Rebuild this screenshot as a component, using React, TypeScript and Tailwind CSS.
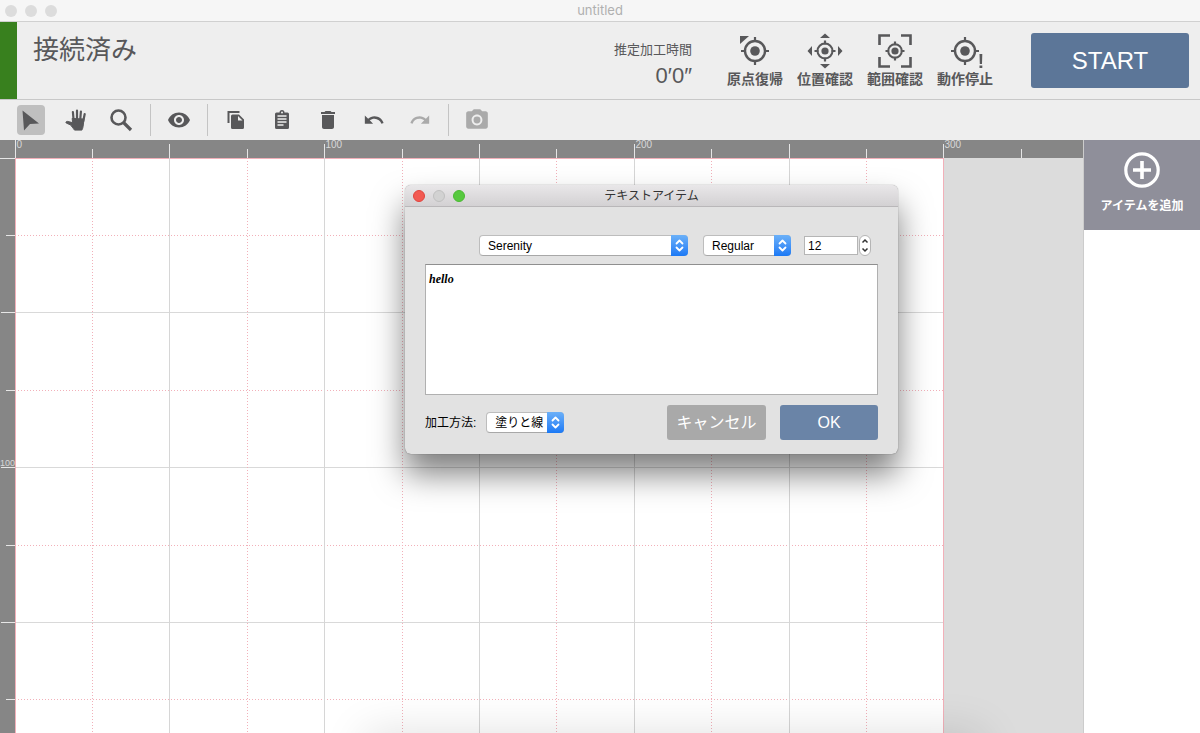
import { useEffect, useState } from 'react';
import type { ReactNode } from 'react';
import { MdDelete, MdPhotoCamera, MdRedo, MdUndo, MdVisibility } from 'react-icons/md';

// pixels for a 25mm step on the work area
const STEP = 77.4;
const SHEET_STEPS = 12;

const range = (n: number) => Array.from({ length: n }, (_, i) => i);
const at = (i: number) => Math.floor(i * STEP) + 0.5;

// how many ruler steps fit beside the side panel and below the bars
const countSteps = () => ({
  x: Math.floor((window.innerWidth - 132) / STEP) + 1,
  y: Math.floor((window.innerHeight - 158) / STEP) + 1
});

const Target = ({ r, dot, reach }: { r: number; dot: number; reach: number }) => (
  <>
    <circle cx="18" cy="18" r={r} fill="none" stroke="currentColor" strokeWidth={r > 8 ? 2.4 : 2} />
    <circle cx="18" cy="18" r={dot} />
    <path
      d={`M18 ${18 - reach}V${19 - r}M18 ${17 + r}V${18 + reach}M${18 - reach} 18H${19 - r}M${17 + r} 18H${18 + reach}`}
      stroke="currentColor"
      strokeWidth="2.2"
    />
  </>
);

const machineActions: { label: string; icon: ReactNode }[] = [
  {
    label: '原点復帰',
    icon: (
      <>
        <Target r={10} dot={4.8} reach={14} />
        <path d="M3 3h9l-9 8z" />
      </>
    )
  },
  {
    label: '位置確認',
    icon: (
      <>
        <Target r={7.5} dot={3.6} reach={10.5} />
        <path d="M18 .5l5 4.500h-10zM18 35.500l5-4.500h-10zM.5 18l4.500-5v10zM35.500 18l-4.500-5v10z" />
      </>
    )
  },
  {
    label: '範囲確認',
    icon: (
      <>
        <Target r={6.8} dot={3.6} reach={9.5} />
        <path
          d="M2.500 12V2.500H13M24 2.500h9.500V12M33.500 24v9.500H24M13 33.500H2.500V24"
          fill="none"
          stroke="currentColor"
          strokeWidth="2.600"
        />
      </>
    )
  },
  {
    label: '動作停止',
    icon: (
      <>
        <Target r={10} dot={4.8} reach={14} />
        <path d="M32.500 21h2.800l-.3 10h-2.200zM32.500 32.500h2.800v2.500h-2.800z" />
      </>
    )
  }
];

const CursorIcon = () => (
  <svg viewBox="0 0 24 24" className="h-6 w-6" fill="currentColor">
    <path d="M3.500 2.500L20 15.500l-9 .5L5 22.500z" />
  </svg>
);

const HandIcon = () => (
  <svg viewBox="0 0 24 24" className="h-6 w-6" fill="currentColor" stroke="currentColor" strokeLinecap="round">
    <path d="M9.500 11L8.900 4M13 11V2.700M16.300 11l.6-7.500M19.300 13l1.400-7" fill="none" strokeWidth="2.200" />
    <path d="M8.500 10.500L20 11l-.9 7.500c-.3 1.800-.8 2.800-1.200 3.600H10.500c-1.500-1.800-2.800-4.200-4.300-5.300L2.200 15c-.8-.8.3-1.800 1.400-1.600l4.800 1.200z" strokeWidth="1" />
  </svg>
);

const SearchIcon = () => (
  <svg viewBox="0 0 24 24" className="h-6 w-6" fill="none" stroke="currentColor">
    <circle cx="9.500" cy="9.500" r="7" strokeWidth="2.600" />
    <path d="M14.500 14.500l7.500 7.500" strokeWidth="3.200" />
  </svg>
);

const CopyIcon = () => (
  <svg viewBox="0 0 24 24" className="h-6 w-6" fill="currentColor">
    <path d="M3.500 3h12v2H5.500v10h-2z" />
    <path
      fillRule="evenodd"
      d="M8.500 6.500h6.500l5 5V19.500a1.500 1.500 0 0 1-1.500 1.500h-10A1.500 1.500 0 0 1 7 19.500V8a1.500 1.500 0 0 1 1.500-1.500zM14 8v4.500h4.500z"
    />
  </svg>
);

const PasteIcon = () => (
  <svg viewBox="0 0 24 24" className="h-6 w-6">
    <path
      fill="currentColor"
      d="M6.500 4.500H9.500a2.500 2.500 0 0 1 5 0h3A1.500 1.500 0 0 1 19 6v13.500a1.500 1.500 0 0 1-1.500 1.500h-11A1.500 1.500 0 0 1 5 19.500V6a1.500 1.500 0 0 1 1.500-1.500z"
    />
    <path d="M7.500 8h9M7.500 11h9M7.500 14h9M7.500 17h6" stroke="#eee" strokeWidth="1.300" />
    <circle cx="12" cy="4.500" r="1" fill="#eee" />
  </svg>
);

const ToolButton = ({
  label,
  active,
  disabled,
  onClick,
  children
}: {
  label: string;
  active?: boolean;
  disabled?: boolean;
  onClick?: () => void;
  children: ReactNode;
}) => (
  <button
    aria-label={label}
    disabled={disabled}
    onClick={onClick}
    className={`flex h-[30px] w-7 items-center justify-center rounded-sm disabled:text-[#aaaaaa] ${
      active ? 'bg-[#bfbfbf]' : ''
    }`}>
    {children}
  </button>
);

const Divider = () => <div className="h-8 w-px bg-[#c4c4c4]" />;

const Select = ({ id, options, className }: { id: string; options: string[]; className: string }) => (
  <div className={`relative flex h-[21px] ${className}`}>
    <select
      id={id}
      aria-label={id}
      className="h-full w-full appearance-none rounded border border-[#bdbdbd] border-b-[#a8a8a8] bg-white pl-2 text-xs leading-4 text-black">
      {options.map(option => (
        <option key={option}>{option}</option>
      ))}
    </select>
    <svg
      viewBox="0 0 17 21"
      className="pointer-events-none absolute top-0 right-0 h-full w-[17px] rounded-r bg-linear-to-b from-[#6bb0f8] to-[#1a79f5]"
      fill="none"
      stroke="white"
      strokeWidth="1.800"
      strokeLinecap="round"
      strokeLinejoin="round">
      <path d="M5.500 8.500l3-3 3 3M5.500 12.500l3 3 3-3" />
    </svg>
  </div>
);

const TopRuler = ({ steps }: { steps: number }) => (
  <svg className="h-[18px] min-w-0 flex-1 bg-[#868686]">
    {range(steps).map(i => (
      <g key={i}>
        <path d={`M${at(i)} ${i === 0 ? 0 : i % 2 ? 9 : 4}V18`} stroke="#e6e6e6" />
        {i % 4 === 0 && (
          <text x={at(i) + 1} y="8" fontSize="10" fill="#d8d8d8">
            {i * 25}
          </text>
        )}
      </g>
    ))}
  </svg>
);

const SideRuler = ({ steps }: { steps: number }) => (
  <svg className="h-full w-[15px] shrink-0 bg-[#868686]">
    {range(steps).map(i => (
      <g key={i}>
        <path d={`M${i === 0 ? 0 : i % 2 ? 6 : 1} ${at(i)}H15`} stroke="#e6e6e6" />
        {i > 0 && i % 4 === 0 && (
          <text x="15" y={at(i) - 2} fontSize="9" fill="#d8d8d8" textAnchor="end">
            {i * 25}
          </text>
        )}
      </g>
    ))}
  </svg>
);

const Sheet = ({ steps }: { steps: number }) => (
  <svg className="h-full w-[929px] shrink-0 bg-white">
    {range(steps).map(i => (
      <path
        key={`h${i}`}
        d={`M0 ${at(i)}H929`}
        stroke={i % 2 || i === 0 ? '#f2b0b9' : '#d9d9d9'}
        strokeDasharray={i % 2 ? '1 2' : undefined}
      />
    ))}
    {range(SHEET_STEPS + 1).map(i => {
      const edge = i === 0 || i === SHEET_STEPS;
      return (
        <path
          key={`v${i}`}
          d={`M${at(i)} 0V2400`}
          stroke={i % 2 || edge ? '#f2b0b9' : '#d6d6d6'}
          strokeDasharray={i % 2 ? '1 2' : undefined}
        />
      );
    })}
  </svg>
);

const TextItemDialog = ({ onClose }: { onClose: () => void }) => {
  const [text, setText] = useState('hello');
  const [size, setSize] = useState(12);

  return (
    <div
      role="dialog"
      aria-labelledby="dialog-title"
      className="absolute top-[45px] left-[405px] w-[493px] rounded-md bg-[#e2e2e2] shadow-[0_0_1px_rgba(0,0,0,0.6),0_20px_32px_rgba(0,0,0,0.5)]">
      <div className="relative flex h-[22px] items-center justify-center rounded-t-md border-b border-[#b9b7b9] bg-linear-to-b from-[#e9e7e9] to-[#d3d1d3]">
        <div className="absolute left-2 flex gap-2">
          <button aria-label="閉じる" onClick={onClose} className="h-3 w-3 rounded-full border border-[#e0443e] bg-[#f25a52]" />
          <button aria-label="しまう" disabled className="h-3 w-3 rounded-full border border-[#c0c0c0] bg-[#d2d2d2]" />
          <button aria-label="拡大" className="h-3 w-3 rounded-full border border-[#4bb934] bg-[#57c93f]" />
        </div>
        <h2 id="dialog-title" className="text-xs text-[#333333]">
          テキストアイテム
        </h2>
      </div>

      <div className="px-5 pt-7 pb-3.5">
        <div className="flex items-center justify-end pr-[7px]">
          <Select id="フォント" options={['Serenity']} className="mr-[15px] w-[209px]" />
          <Select id="スタイル" options={['Regular', 'Bold']} className="mr-[13px] w-[88px]" />
          <input
            aria-label="サイズ"
            value={size}
            onChange={e => setSize(Number(e.target.value))}
            className="mr-px h-[19px] w-[54px] border border-[#b5b5b5] bg-white px-[3px] text-xs text-black"
          />
          <div className="flex h-[21px] w-3 flex-col rounded-md border border-[#b5b5b5] bg-white text-[#333333]">
            <button aria-label="増やす" onClick={() => setSize(s => s + 1)} className="flex flex-1 items-center justify-center">
              <svg viewBox="0 0 8 6" className="h-1.5 w-2" fill="none" stroke="currentColor" strokeWidth="1.500">
                <path d="M1.500 4.500L4 2l2.500 2.500" />
              </svg>
            </button>
            <button aria-label="減らす" onClick={() => setSize(s => s - 1)} className="flex flex-1 items-center justify-center">
              <svg viewBox="0 0 8 6" className="h-1.5 w-2" fill="none" stroke="currentColor" strokeWidth="1.500">
                <path d="M1.500 1.500L4 4l2.500-2.500" />
              </svg>
            </button>
          </div>
        </div>

        <textarea
          aria-label="テキスト"
          value={text}
          onChange={e => setText(e.target.value)}
          className="mt-2 block h-[131px] w-full resize-none border border-[#b0b0b0] border-t-[#8f8f8f] bg-white px-[3px] py-1 font-['Liberation_Serif',cursive] text-xs leading-5 font-bold text-black italic"
        />

        <div className="mt-2.5 flex items-center">
          <label htmlFor="加工方法" className="mr-2.5 text-xs text-black">
            加工方法:
          </label>
          <Select id="加工方法" options={['塗りと線', '塗り', '線']} className="w-[78px]" />
          <button
            onClick={onClose}
            className="ml-auto h-[35px] w-[99px] rounded-[3px] bg-[#a9a9a9] text-base text-white">
            キャンセル
          </button>
          <button
            onClick={onClose}
            className="ml-3.5 h-[35px] w-[98px] rounded-[3px] bg-[#6a84a7] text-base text-white">
            OK
          </button>
        </div>
      </div>
    </div>
  );
};

const App = () => {
  const [tool, setTool] = useState('select');
  const [isDialogOpen, setIsDialogOpen] = useState(true);
  const [steps, setSteps] = useState(countSteps);

  useEffect(() => {
    const onResize = () => setSteps(countSteps());
    window.addEventListener('resize', onResize);
    return () => window.removeEventListener('resize', onResize);
  }, []);

  return (
    <div className="flex h-screen flex-col overflow-hidden bg-[#eeeeee] font-['Liberation_Sans','Noto_Sans_CJK_JP',sans-serif] text-[#58585a]">
      <div className="relative flex h-[22px] shrink-0 items-center justify-center border-b border-[#d0d0d0] bg-[#f6f6f6]">
        <div className="absolute left-[5px] flex gap-2">
          {range(3).map(i => (
            <span key={i} className="h-3 w-3 rounded-full bg-[#dcdcdc]" />
          ))}
        </div>
        <h1 className="font-[Inter,sans-serif] text-[13px] text-[#b0b0b0]">untitled</h1>
      </div>

      <header className="flex h-[78px] shrink-0 border-b border-[#c8c8c8]">
        <div className="w-[17px] bg-[#38801e]" />
        <p className="mt-2 ml-4 text-[26px] leading-10">接続済み</p>
        <div className="ml-auto pt-[18px] text-right">
          <p className="text-[13px] leading-5">推定加工時間</p>
          <p className="mt-0.5 text-[22px] leading-7">0′0″</p>
        </div>
        <div className="mt-[11px] ml-[35px] flex gap-3.5">
          {machineActions.map(({ label, icon }) => (
            <button key={label} className="flex w-14 flex-col items-center">
              <svg viewBox="0 0 36 36" className="h-9 w-9 shrink-0" fill="currentColor">
                {icon}
              </svg>
              <span className="text-sm leading-5 font-bold whitespace-nowrap">{label}</span>
            </button>
          ))}
        </div>
        <button className="mt-[11px] mr-[11px] ml-[38px] h-[55px] w-[158px] rounded-[3px] bg-[#5c7698] text-2xl text-white">
          START
        </button>
      </header>

      <nav className="flex h-10 shrink-0 items-center pl-[17px]">
        <div className="mr-[15px] flex gap-[17px]">
          <ToolButton label="選択" active={tool === 'select'} onClick={() => setTool('select')}>
            <CursorIcon />
          </ToolButton>
          <ToolButton label="移動" active={tool === 'hand'} onClick={() => setTool('hand')}>
            <HandIcon />
          </ToolButton>
          <ToolButton label="拡大" active={tool === 'zoom'} onClick={() => setTool('zoom')}>
            <SearchIcon />
          </ToolButton>
        </div>
        <Divider />
        <div className="mx-3.5 flex">
          <ToolButton label="プレビュー">
            <MdVisibility className="h-6 w-6" />
          </ToolButton>
        </div>
        <Divider />
        <div className="mx-3.5 flex gap-[18px]">
          <ToolButton label="コピー">
            <CopyIcon />
          </ToolButton>
          <ToolButton label="貼り付け">
            <PasteIcon />
          </ToolButton>
          <ToolButton label="削除">
            <MdDelete className="h-6 w-6" />
          </ToolButton>
          <ToolButton label="元に戻す">
            <MdUndo className="h-[22px] w-[22px]" />
          </ToolButton>
          <ToolButton label="やり直す" disabled>
            <MdRedo className="h-[22px] w-[22px]" />
          </ToolButton>
        </div>
        <Divider />
        <div className="mx-3.5 flex">
          <ToolButton label="撮影" disabled>
            <MdPhotoCamera className="h-[26px] w-[26px]" />
          </ToolButton>
        </div>
      </nav>

      <div className="flex min-h-0 flex-1">
        <main className="relative flex min-w-0 flex-1 flex-col overflow-hidden">
          <div className="flex h-[18px] shrink-0">
            <div className="w-[15px] bg-[#868686]" />
            <TopRuler steps={steps.x} />
          </div>
          <div className="flex min-h-0 flex-1 overflow-hidden bg-[#dcdcdc]">
            <SideRuler steps={steps.y} />
            <Sheet steps={steps.y} />
          </div>
          <div className="pointer-events-none absolute top-full right-[100px] left-[365px] h-10 shadow-[0_0_44px_rgba(0,0,0,0.13)]" />
          {isDialogOpen && <TextItemDialog onClose={() => setIsDialogOpen(false)} />}
        </main>

        <aside className="w-[117px] shrink-0 border-l border-[#cccccc] bg-white">
          <button
            onClick={() => setIsDialogOpen(true)}
            className="flex h-[90px] w-full flex-col items-center bg-[#8f8f9a] pt-3 text-white">
            <svg viewBox="0 0 36 36" className="h-9 w-9" fill="none" stroke="currentColor">
              <circle cx="18" cy="18" r="16.200" strokeWidth="3.200" />
              <path d="M18 9v18M9 18h18" strokeWidth="3.600" />
            </svg>
            <span className="mt-2 text-xs leading-5 font-bold whitespace-nowrap">アイテムを追加</span>
          </button>
        </aside>
      </div>
    </div>
  );
};

export default App;
